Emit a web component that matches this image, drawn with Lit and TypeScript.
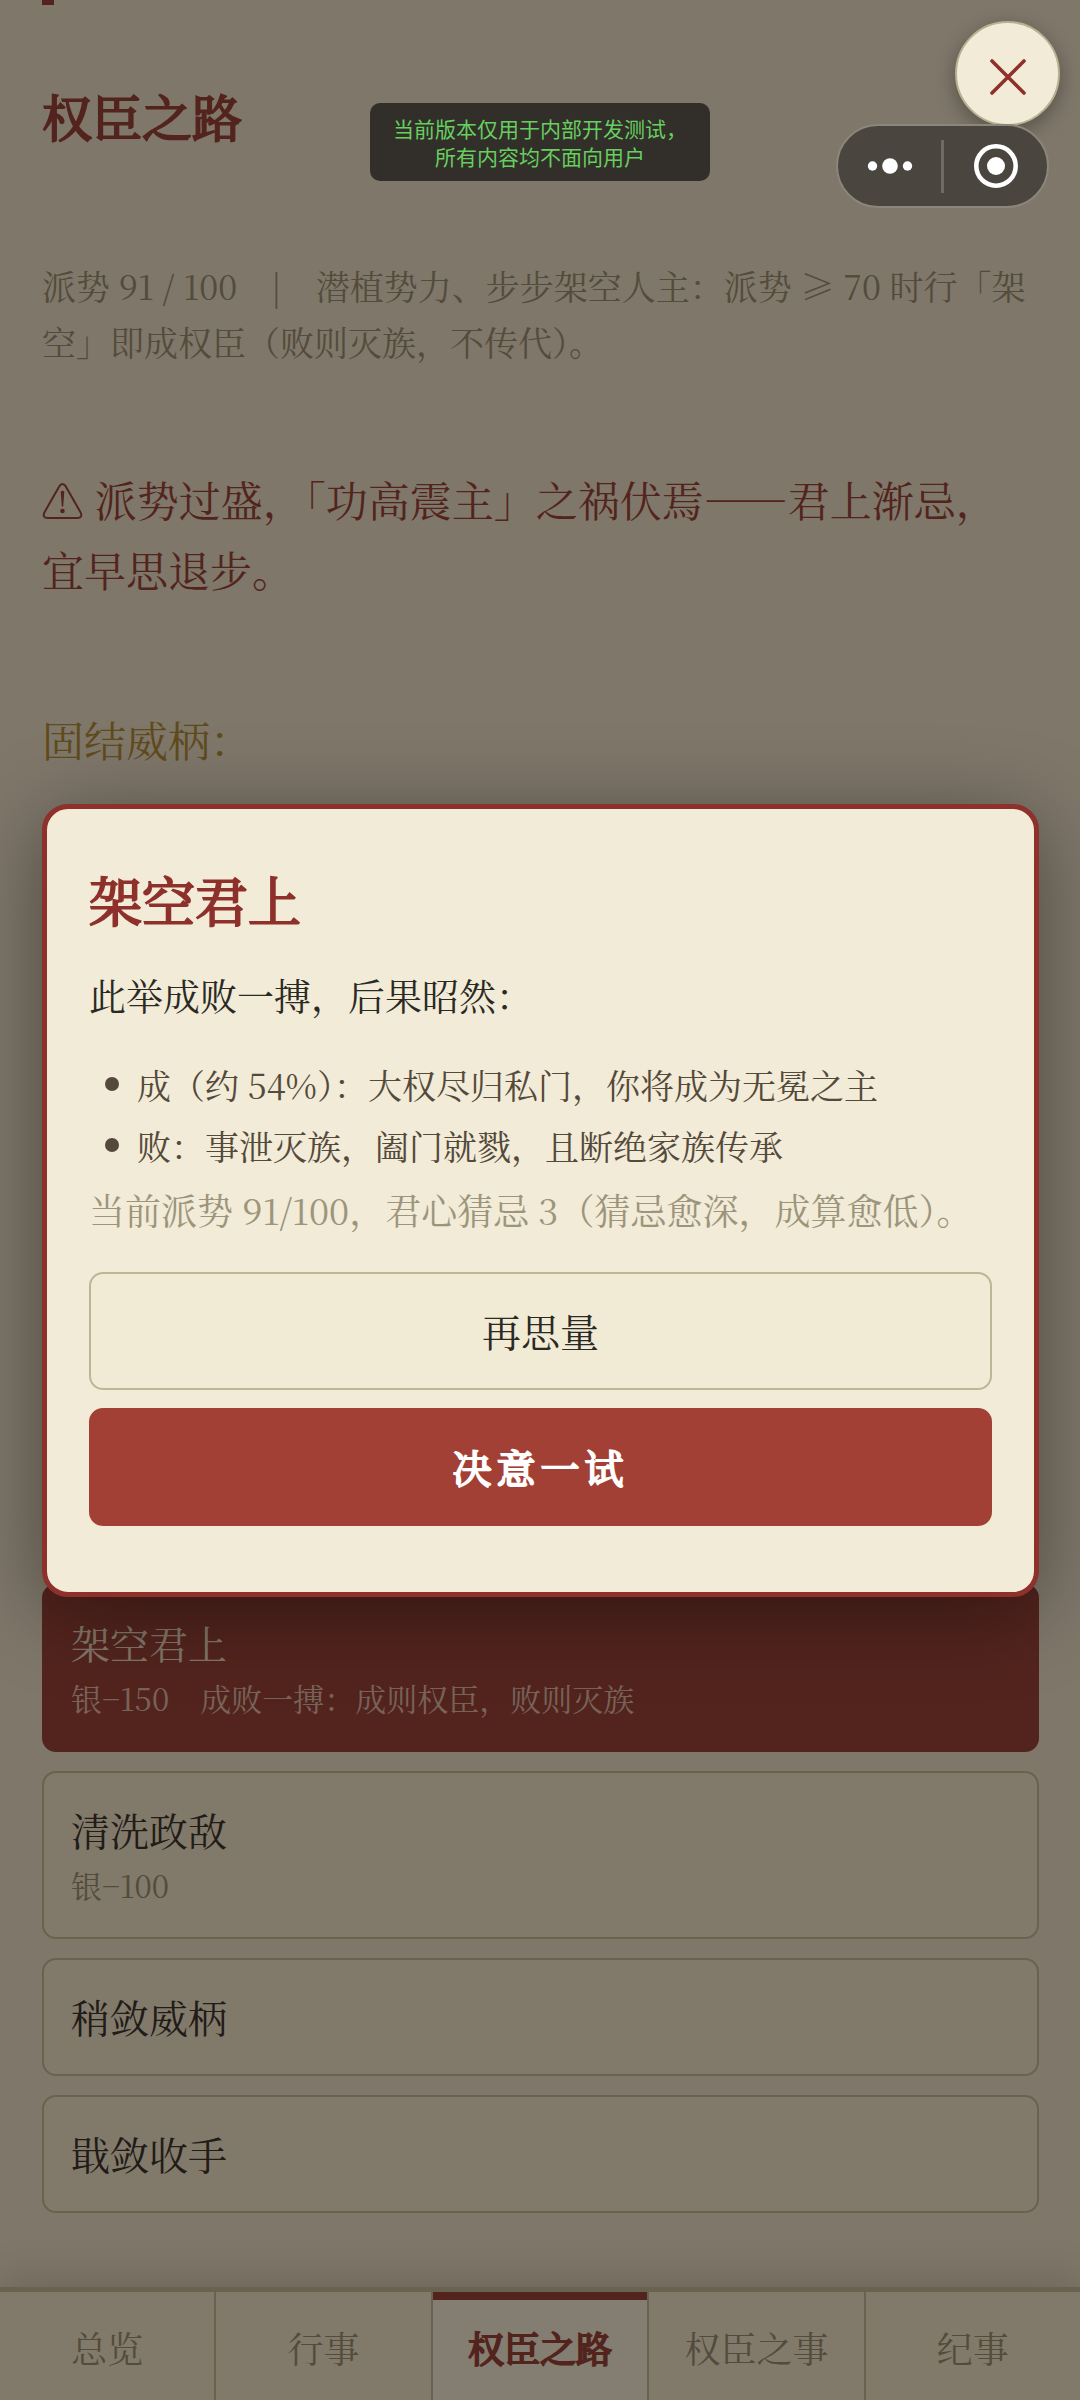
import { LitElement, html, css, nothing } from "lit";
import { customElement, property, state } from "lit/decorators.js";
import { classMap } from "lit/directives/class-map.js";

interface Action {
  title: string;
  note?: string;
  danger?: boolean;
}

const ACTIONS: Action[] = [
  { title: "架空君上", note: "银−150　成败一搏：成则权臣，败则灭族", danger: true },
  { title: "清洗政敌", note: "银−100" },
  { title: "稍敛威柄" },
  { title: "戢敛收手" },
];

const TABS = ["总览", "行事", "权臣之路", "权臣之事", "纪事"];

@customElement("action-card")
export class ActionCard extends LitElement {
  @property({ attribute: false }) action!: Action;

  static styles = css`
    :host {
      display: block;
    }
    .card {
      display: flex;
      flex-direction: column;
      width: 100%;
      box-sizing: border-box;
      margin: 0;
      padding: 25px 27px 27px;
      border: 2px solid #bab08c;
      border-radius: 14px;
      background: #ebe0c6;
      color: #2b2520;
      font: inherit;
      text-align: left;
    }
    .title {
      font-size: 39px;
      line-height: 62px;
    }
    .note {
      font-size: 31px;
      line-height: 50px;
      color: #8f8469;
    }
    .danger {
      border-color: #8e342c;
      background: #8e342c;
      color: #ead6c0;
    }
    .danger .note {
      color: #d8b2a2;
    }
  `;

  render() {
    const { title, note, danger } = this.action;
    return html`
      <button class=${classMap({ card: true, danger: !!danger })} type="button">
        <span class="title">${title}</span>
        ${note ? html`<span class="note">${note}</span>` : nothing}
      </button>
    `;
  }
}

@customElement("confirm-dialog")
export class ConfirmDialog extends LitElement {
  static styles = css`
    :host {
      display: block;
    }
    .dialog {
      padding: 55px 42px 66px;
      border: 5px solid #8e302b;
      border-radius: 26px;
      background: #f1ebd7;
      color: #2b2924;
      box-shadow: 0 14px 84px rgba(0, 0, 0, 0.4);
    }
    h2 {
      margin: 0 0 31px;
      font-size: 53px;
      line-height: 70px;
      font-weight: 400;
      -webkit-text-stroke: 2px currentColor;
      color: #8e302b;
    }
    p {
      margin: 0;
      font-size: 37px;
      line-height: 60px;
    }
    ul {
      margin: 29px 0 4px;
      padding: 0;
      list-style: none;
      font-size: 34px;
      line-height: 61px;
      color: #54493a;
    }
    li {
      display: flex;
      align-items: center;
      gap: 18px;
      padding-left: 16px;
    }
    li::before {
      content: "";
      flex: none;
      width: 14px;
      height: 14px;
      border-radius: 50%;
      background: #54493a;
    }
    .hint {
      font-size: 36px;
      color: #9c957c;
    }
    .buttons {
      display: flex;
      flex-direction: column;
      gap: 18px;
      margin-top: 32px;
    }
    .button {
      margin: 0;
      padding: 25px 28px 27px;
      border: 2px solid #beb697;
      border-radius: 14px;
      background: #f1ead5;
      color: #2b2924;
      font: inherit;
      font-size: 39px;
      line-height: 62px;
    }
    .primary {
      border-color: #a34035;
      background: #a34035;
      color: #fff;
      -webkit-text-stroke: 2px currentColor;
      letter-spacing: 5px;
    }
  `;

  render() {
    return html`
      <section class="dialog" role="dialog" aria-modal="true" aria-labelledby="heading" lang="zh-CN">
        <h2 id="heading">架空君上</h2>
        <p>此举成败一搏，后果昭然：</p>
        <ul>
          <li>成（约 54%）：大权尽归私门，你将成为无冕之主</li>
          <li>败：事泄灭族，阖门就戮，且断绝家族传承</li>
        </ul>
        <p class="hint">当前派势 91/100，君心猜忌 3（猜忌愈深，成算愈低）。</p>
        <div class="buttons">
          <button class="button" type="button">再思量</button>
          <button class="button primary" type="button">决意一试</button>
        </div>
      </section>
    `;
  }
}

@customElement("app-root")
export class AppRoot extends LitElement {
  @state() private tab = 2;

  static styles = css`
    :host {
      display: block;
      position: relative;
      font-family: "Noto Serif CJK SC", "Noto Serif SC", "Liberation Serif", "Noto Sans CJK SC", serif;
    }
    .page {
      display: flex;
      flex-direction: column;
      min-height: 100vh;
      background: #e6dbc4;
      color: #2b2520;
    }
    main {
      flex: 1;
      display: flex;
      flex-direction: column;
      padding: 0 41px 74px 42px;
    }
    .mark {
      width: 12px;
      height: 5px;
      background: #8e342c;
    }
    h1 {
      margin: 75px 0 0;
      font-size: 50px;
      line-height: 70px;
      font-weight: 400;
      -webkit-text-stroke: 2px currentColor;
      color: #8e342c;
    }
    .summary {
      margin: 108px 0 0;
      font-size: 34px;
      line-height: 56px;
      color: #8f8469;
    }
    .warning,
    .group {
      font-size: 42px;
      line-height: 70px;
      font-weight: 400;
    }
    .warning {
      margin: 94px 0 0;
      color: #8e342c;
    }
    .warning svg {
      width: 42px;
      height: 42px;
      vertical-align: -6px;
    }
    .group {
      margin: 100px 0 0;
      color: #a8832a;
    }
    .actions {
      display: flex;
      flex-direction: column;
      gap: 19px;
      margin-top: auto;
    }
    nav {
      display: flex;
      border-top: 5px solid #bab08c;
      background: #ebe0c6;
      box-shadow: 0 -8px 40px rgba(60, 45, 20, 0.2);
    }
    .tab {
      flex: 1 1 0;
      box-sizing: content-box;
      margin: 0;
      padding: 30px 0 26px;
      border: 0;
      border-right: 2px solid #bab08c;
      background: none;
      color: #8f8469;
      font: inherit;
      font-size: 36px;
      line-height: 52px;
    }
    .tab:last-child {
      border-right: 0;
    }
    .tab.active {
      background: #eee8d2;
      box-shadow: inset 0 8px 0 #8e342c;
      color: #8e342c;
      -webkit-text-stroke: 2px currentColor;
    }
    .overlay {
      position: absolute;
      inset: 0;
      display: flex;
      align-items: center;
      padding: 0 41px 0 42px;
      background: rgba(24, 20, 16, 0.5);
    }
    confirm-dialog {
      flex: 1;
    }
    .toast {
      position: absolute;
      top: 103px;
      left: 50%;
      transform: translateX(-50%);
      padding: 11px 23px;
      border-radius: 10px;
      background: #322e29;
      color: #66cf60;
      font-family: "Noto Sans CJK SC", sans-serif;
      font-size: 21px;
      line-height: 28px;
      text-align: center;
      white-space: nowrap;
    }
    .close {
      position: absolute;
      top: 21px;
      right: 20px;
      display: grid;
      place-items: center;
      box-sizing: border-box;
      width: 105px;
      height: 105px;
      padding: 6px 0 0;
      border: 2px solid #b8b091;
      border-radius: 50%;
      background: #f1ebd7;
      box-shadow: 0 6px 20px rgba(0, 0, 0, 0.32);
    }
    .close svg {
      width: 40px;
      height: 40px;
    }
    .capsule {
      position: absolute;
      top: 124px;
      right: 31px;
      display: flex;
      align-items: center;
      box-sizing: border-box;
      width: 213px;
      height: 84px;
      border: 2px solid #8b867b;
      border-radius: 42px;
      background: #4a463f;
    }
    .capsule button {
      flex: 1;
      display: grid;
      place-items: center;
      height: 100%;
      margin: 0;
      padding: 0;
      border: 0;
      background: none;
    }
    .capsule svg {
      width: 48px;
      height: 48px;
    }
    .divider {
      width: 3px;
      height: 53px;
      background: #6f6b63;
    }
  `;

  render() {
    return html`
      <div class="page" lang="zh-CN">
        <main>
          <div class="mark"></div>
          <h1>权臣之路</h1>
          <p class="summary">派势 91 / 100　|　潜植势力、步步架空人主：派势 ≥ 70 时行「架空」即成权臣（败则灭族，不传代）。</p>
          <p class="warning">
            <svg viewBox="0 0 42 42" fill="none" stroke="currentColor" stroke-width="2" stroke-linejoin="round" role="img" aria-label="警告">
              <path d="M17.2 5.4 Q20.5 0.6 23.8 5.4 L38.6 31.4 Q41 36.8 35.2 37 H5.8 Q0 36.8 2.4 31.4 Z" />
              <path d="M18.7 10.5 Q20.5 8.8 22.3 10.5 L21.2 25.5 H19.8 Z" fill="currentColor" stroke="none" />
              <circle cx="20.5" cy="30" r="2.3" fill="currentColor" stroke="none" />
            </svg>
            派势过盛，「功高震主」之祸伏焉——君上渐忌，宜早思退步。
          </p>
          <h2 class="group">固结威柄：</h2>
          <div class="actions">
            ${ACTIONS.map((a) => html`<action-card .action=${a}></action-card>`)}
          </div>
        </main>
        <nav>
          ${TABS.map(
            (name, i) => html`
              <button
                type="button"
                class=${classMap({ tab: true, active: i === this.tab })}
                @click=${() => (this.tab = i)}
              >${name}</button>
            `
          )}
        </nav>
      </div>
      <div class="overlay"><confirm-dialog></confirm-dialog></div>
      <div class="toast" role="status" lang="zh-CN">当前版本仅用于内部开发测试，<br />所有内容均不面向用户</div>
      <button class="close" type="button" aria-label="关闭">
        <svg viewBox="0 0 40 40" stroke="#8e302b" stroke-width="3.6" stroke-linecap="round">
          <path d="M4 4 L36 36 M36 4 L4 36" />
        </svg>
      </button>
      <div class="capsule">
        <button type="button" aria-label="更多">
          <svg viewBox="0 0 48 48" fill="#fff">
            <circle cx="6.5" cy="24" r="4.7" />
            <circle cx="24" cy="24" r="7.8" />
            <circle cx="41.5" cy="24" r="4.7" />
          </svg>
        </button>
        <span class="divider"></span>
        <button type="button" aria-label="退出">
          <svg viewBox="0 0 48 48" fill="none">
            <circle cx="24" cy="24" r="19.7" stroke="#fff" stroke-width="4.6" />
            <circle cx="24" cy="24" r="9" fill="#fff" />
          </svg>
        </button>
      </div>
    `;
  }
}
